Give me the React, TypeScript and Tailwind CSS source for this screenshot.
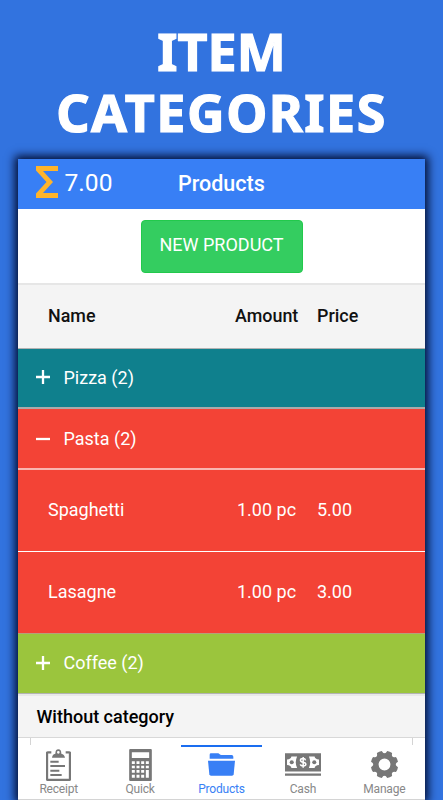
import type { ReactNode } from "react";

interface Tab {
  label: string;
  icon: ReactNode;
  active?: boolean;
}

interface CategoryRowProps {
  name: string;
  open?: boolean;
  className: string;
}

interface ProductRowProps {
  name: string;
  amount: string;
  price: string;
  className: string;
}

function ReceiptIcon() {
  return (
    <svg width="25" height="32" viewBox="0 0 75 96" fill="currentColor">
      <path d="M16 10H6Q3 10 3 13V90Q3 93 6 93H69Q72 93 72 90V13Q72 10 69 10H59" fill="none" stroke="currentColor" strokeWidth="7" />
      <path fillRule="evenodd" d="M18 26Q19 15 28 14Q28 1 37 1Q46 1 46 14Q55 15 57 26ZM37 6A4 4 0 1 0 37 14A4 4 0 1 0 37 6Z" />
      <path d="M13 38H38M13 51H57M13 65H40M13 78H47" stroke="currentColor" strokeWidth="6" />
    </svg>
  );
}

function QuickIcon() {
  return (
    <svg width="23" height="32" viewBox="0 0 68 96">
      <rect width="68" height="96" rx="3" fill="currentColor" />
      <path fill="#fff" d="M8 10h52v17H8zM8 37h9v8H8zM22 37h9v8h-9zM36 37h9v8h-9zM50 37h9v8h-9zM8 50h9v8H8zM22 50h9v8h-9zM36 50h9v8h-9zM50 50h9v8h-9zM8 63h9v8H8zM22 63h9v8h-9zM36 63h9v8h-9zM50 63h9v23h-9zM8 77h9v9H8zM22 77h9v9h-9zM36 77h9v9h-9z" />
    </svg>
  );
}

function ProductsIcon() {
  return (
    <svg width="27" height="23" viewBox="0 0 81 67" fill="currentColor">
      <path d="M5 16V4Q5 0 9 0H30Q33 0 35 3Q37 5 40 5H71Q76 5 76 10V16Z" />
      <path d="M0 22H81L77 63Q76 67 72 67H9Q5 67 4 63Z" />
    </svg>
  );
}

function CashIcon() {
  return (
    <svg width="36" height="23" viewBox="0 0 107 67" fill="currentColor">
      <path d="M0 0H107V54H0ZM0 60H107V67H0Z" />
      <path fill="#fff" d="M19 10H36Q28 27 36 44H19Q18 36 6 35V19Q18 18 19 10ZM88 10H71Q79 27 71 44H88Q89 36 101 35V19Q89 18 88 10Z" />
      <circle cx="20" cy="27" r="6" />
      <circle cx="87" cy="27" r="6" />
      <path fill="none" stroke="#fff" strokeWidth="4.5" d="M61 21Q60 16 54 16Q46 16 46 21Q46 26 54 27Q62 28 62 33Q62 38 54 38Q46 38 46 33M54 11V43" />
    </svg>
  );
}

function ManageIcon() {
  return (
    <svg width="27" height="27" viewBox="-41 -41 82 82">
      <circle r="26" fill="none" stroke="currentColor" strokeWidth="16" />
      <g fill="currentColor">
        {[22.5, 67.5, 112.5, 157.5, 202.5, 247.5, 292.5, 337.5].map((angle) => (
          <path key={angle} transform={`rotate(${angle})`} d="M-13 -30Q-9 -34 -8 -41Q0 -43 8 -41Q9 -34 13 -30Z" />
        ))}
      </g>
    </svg>
  );
}

function CategoryRow({ name, open, className }: CategoryRowProps) {
  return (
    <div className={`flex items-center pl-[18px] text-white ${className}`}>
      <svg width="14" height="14" viewBox="0 0 14 14" className="mr-[13.5px]">
        <path d={open ? "M0 7H14" : "M0 7H14M7 0V14"} stroke="#fff" strokeWidth="2.3" />
      </svg>
      <span>{name}</span>
    </div>
  );
}

function ProductRow({ name, amount, price, className }: ProductRowProps) {
  return (
    <div className={`grid grid-cols-[187px_82px_1fr] items-center pb-0.5 pl-[30px] ${className}`}>
      <span>{name}</span>
      <span className="pl-0.5">{amount}</span>
      <span>{price}</span>
    </div>
  );
}

const tabs: Tab[] = [
  { label: "Receipt", icon: <ReceiptIcon /> },
  { label: "Quick", icon: <QuickIcon /> },
  { label: "Products", icon: <ProductsIcon />, active: true },
  { label: "Cash", icon: <CashIcon /> },
  { label: "Manage", icon: <ManageIcon /> },
];

export default function App() {
  return (
    <div className="flex h-[800px] w-[443px] flex-col overflow-hidden bg-[#3273df] font-[Roboto,sans-serif] text-[18px]">
      <h1 className="flex h-[159px] flex-col items-center pt-[20px] font-['Noto_Sans',sans-serif] text-[52px] leading-[61px] font-bold text-white [-webkit-text-stroke:1.2px_white]">
        <span>ITEM</span>
        <span className="tracking-[1.5px]">CATEGORIES</span>
      </h1>
      <div className="ml-[18px] flex h-[641px] w-[407px] flex-col bg-white shadow-[0_0_9px_3px_#000a2c]">
        <header className="flex h-[50px] shrink-0 items-center bg-[#387ff5] pl-[18px] text-white">
          <svg width="22" height="32" viewBox="0 0 22 32" className="mb-1">
            <path d="M0 0H22V5H7L17 16L7 27H22V32H0V27.5L10.5 16L0 4.5Z" fill="#ffb42b" />
          </svg>
          <span className="ml-[6.5px] w-[113.5px] pb-px text-[24.6px]">7.00</span>
          <span className="text-[21.5px] font-medium">Products</span>
        </header>
        <div className="flex h-[76px] shrink-0 justify-center border-b-2 border-[#e6e6e6] pt-[11px]">
          <button className="h-[53px] w-[162px] rounded border border-[#22c94c] bg-[#34cd60] pb-1 text-[18px] text-white">NEW PRODUCT</button>
        </div>
        <div className="grid h-[64px] shrink-0 grid-cols-[187px_82px_1fr] items-center border-b border-[#b2b2b2] bg-[#f4f4f4] pl-[30px] text-[17.9px] font-medium text-[#111]">
          <span>Name</span>
          <span>Amount</span>
          <span>Price</span>
        </div>
        <CategoryRow name="Pizza (2)" className="h-[60px] shrink-0 border-b-2 border-[#aaa] bg-[#0f808d] pb-0.5" />
        <CategoryRow name="Pasta (2)" open className="h-[61px] shrink-0 border-b-2 border-[#f9b5b0] bg-[#f34336]" />
        <ProductRow name="Spaghetti" amount="1.00 pc" price="5.00" className="h-[82px] shrink-0 border-b border-white bg-[#f34336] text-white" />
        <ProductRow name="Lasagne" amount="1.00 pc" price="3.00" className="h-[82px] shrink-0 border-b border-[#b5a27a] bg-[#f34336] text-white" />
        <CategoryRow name="Coffee (2)" className="h-[60px] shrink-0 border-b border-[#b2b2b2] bg-[#9bc53d] pb-0.5" />
        <div className="flex h-[44px] shrink-0 items-center border-t-2 border-b border-t-[#e8e8e8] border-b-[#d8d8d8] bg-[#f4f4f4] pb-px pl-[18.5px] font-medium text-black">
          Without category
        </div>
        <div className="mx-3 h-[7px] shrink-0 border-x border-[#d4d4d4]" />
        <nav className="flex flex-1 border-b border-[#d4d4d4]">
          {tabs.map((tab) => (
            <div
              key={tab.label}
              className={`flex flex-1 flex-col items-center border-t-2 text-[12px] tracking-[-0.2px] ${tab.active ? "border-[#1a6df0] text-[#387ff5]" : "border-transparent text-[#777]"}`}
            >
              <div className="flex h-[35px] items-center justify-center">{tab.icon}</div>
              <span className={`leading-[14px] ${tab.active ? "" : "text-[#888]"}`}>{tab.label}</span>
            </div>
          ))}
        </nav>
      </div>
    </div>
  );
}
